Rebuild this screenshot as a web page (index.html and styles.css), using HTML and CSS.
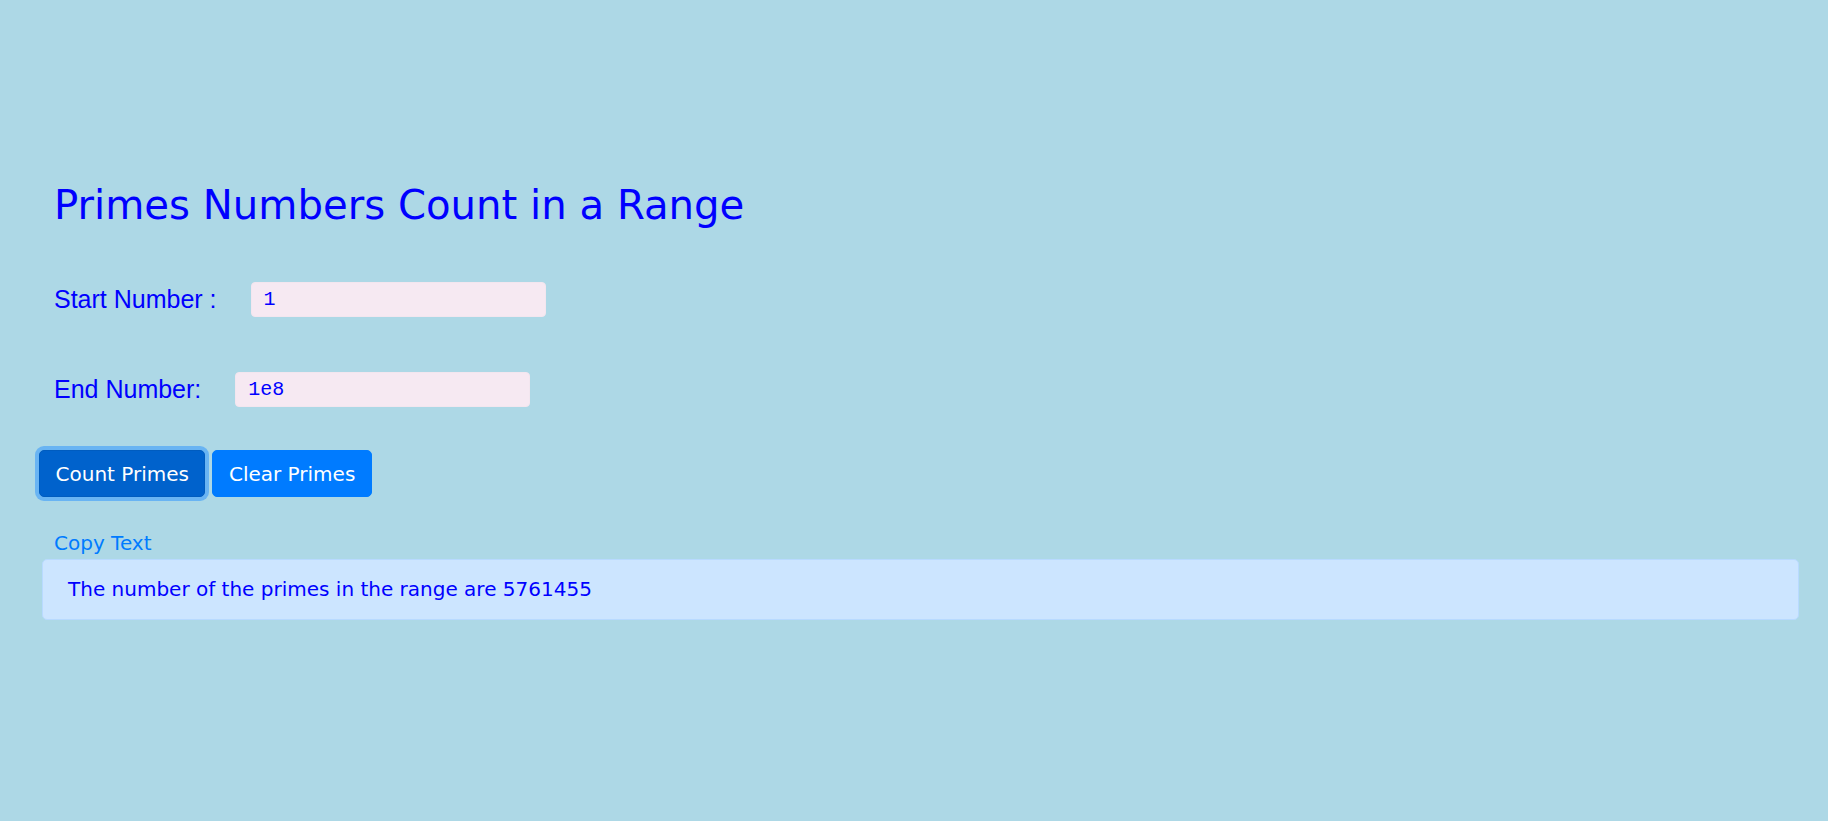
FILE: index.html
```html
<!DOCTYPE html>
<html lang="en">
<head>
<meta charset="utf-8">
<title>Primes Numbers Count in a Range</title>
<link rel="stylesheet" href="styles.css">
</head>
<body>
<div class="page">
  <h1 class="title">Primes Numbers Count in a Range</h1>
  <div class="field field-start">
    <label class="field-label" for="start">Start Number :</label>
    <input class="field-input" id="start" type="text" value="1">
  </div>
  <div class="field field-end">
    <label class="field-label" for="end">End Number:</label>
    <input class="field-input" id="end" type="text" value="1e8">
  </div>
  <div class="actions">
    <button class="btn btn-focus" type="button">Count Primes</button>
    <button class="btn" type="button">Clear Primes</button>
  </div>
  <a class="copy-link" href="#">Copy Text</a>
  <div class="result">The number of the primes in the range are 5761455</div>
</div>
</body>
</html>
```
FILE: styles.css
```css
html, body {
  margin: 0;
  padding: 0;
}
body {
  background: #add8e6;
  min-height: 821px;
  font-family: "DejaVu Sans", Verdana, sans-serif;
  color: #0000ff;
}
.page {
  padding: 181px 29px 0 42px;
}
.title {
  margin: 0;
  padding-left: 12px;
  font-family: "DejaVu Sans", Verdana, sans-serif;
  font-weight: normal;
  font-size: 40.2px;
  line-height: 48px;
  color: #0000ff;
}
.field {
  display: flex;
  align-items: center;
  padding-left: 12px;
}
.field-start {
  margin-top: 53px;
}
.field-end {
  margin-top: 55px;
}
.field-label {
  font-family: "Liberation Sans", Arial, sans-serif;
  font-size: 25px;
  color: #0000ff;
  margin-right: 34px;
}
.field-input {
  box-sizing: border-box;
  width: 295px;
  height: 35px;
  margin: 0;
  padding: 0 12px;
  border: 1px solid #f3e6ef;
  border-radius: 4px;
  background: #f6e9f2;
  font-family: "Liberation Mono", "DejaVu Sans Mono", monospace;
  font-size: 20px;
  color: #0000ff;
  outline: none;
}
.actions {
  display: flex;
  gap: 7px;
  margin-top: 43px;
  margin-left: -3px;
}
.btn {
  box-sizing: border-box;
  height: 47px;
  padding: 7px 15.5px;
  border: 1px solid #007bff;
  border-radius: 5px;
  background: #007bff;
  color: #ffffff;
  font-family: "DejaVu Sans", Verdana, sans-serif;
  font-size: 20px;
  line-height: 30px;
  cursor: pointer;
}
.btn-focus {
  background: #0062cc;
  border-color: #005cbf;
  box-shadow: 0 0 0 4px rgba(38, 143, 255, 0.5);
}
.copy-link {
  display: block;
  margin-top: 31px;
  padding-left: 12px;
  font-size: 20px;
  line-height: 30px;
  color: #007bff;
  text-decoration: none;
}
.result {
  margin-top: 1px;
  padding: 14px 25px 15px;
  border: 1px solid #b8daff;
  border-radius: 5px;
  background: #cce5ff;
  font-size: 20px;
  line-height: 30px;
  color: #0000ff;
}
```
